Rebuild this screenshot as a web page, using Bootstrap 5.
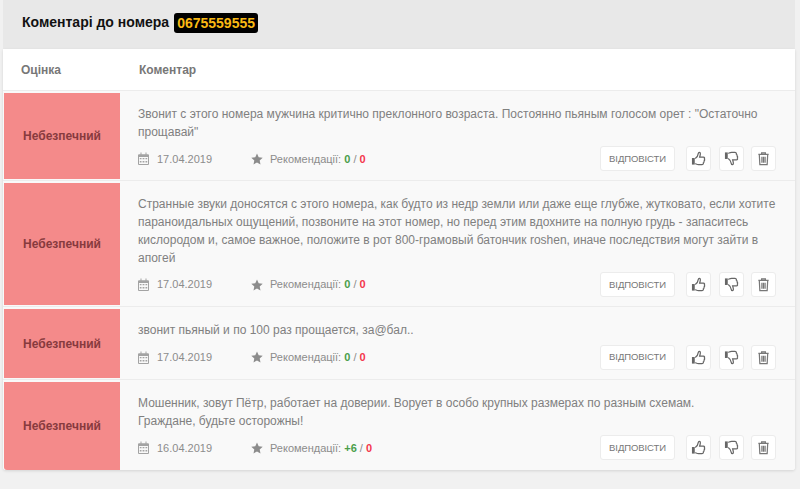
<!DOCTYPE html>
<html lang="uk"><head><meta charset="utf-8">
<link href="https://cdn.jsdelivr.net/npm/bootstrap@5.3.0/dist/css/bootstrap.min.css" rel="stylesheet">
<style>
html,body{height:100%}
body{background:#f1f1f1;font-family:"Liberation Sans",Arial,sans-serif;font-size:12px;color:#808080;overflow:hidden}
.head-band{height:49px;margin:0 5px 0 3px;background:#e8e8e8;padding:0 0 4px 19px;color:#111;font-size:14px;font-weight:700}
.phone-tag{background:#000;color:#f9b914;border-radius:3px;padding:0 3px;height:20px;line-height:20px;margin-left:5px;font-size:14px}
.sheet{margin:0 5px 0 3px;background:#fff;border-radius:0 0 3px 3px;box-shadow:0 1px 3px rgba(0,0,0,.12)}
.sheet-top{height:42px;border-bottom:1px solid #ececec;font-weight:700;color:#777}
.col-score{width:117px;flex:none}
.sheet-top .col-score{padding-left:18px}
.sheet-top .col-text{padding-left:19px}
.entry{background:#f9f9f9;border-bottom:1px solid #ececec;padding:2px 0 0 1px}
.entry:last-child{border-bottom:0;border-radius:0 0 3px 3px}
.score-box{background:#f48a8a;color:#873a3e;font-weight:700;width:116px;flex:none;margin-bottom:1px}
.entry:last-child .score-box{margin-bottom:0;border-bottom-left-radius:3px}
.entry-body{padding:13px 19px 9px 18px;min-width:0}
.entry:last-child .entry-body{padding-bottom:10px}
.entry-text{line-height:17.7px;margin:0 0 5px}
.meta-row{height:25px;font-size:11px;color:#8c8c8c}
.meta-date{width:113px}
.ic{fill:#a3a3a3;flex:none}
.star-ic{fill:#8c8c8c;margin-right:7px}
.ratio-up{color:#4a9e4a;font-weight:700}
.ratio-down{color:#f4364c;font-weight:700}
.sq-btn{height:25px;background:#fff;border:1px solid #ececec;border-radius:3px;color:#777;font-size:9.5px;letter-spacing:-.1px;padding:0;box-shadow:none}
.btn-set{gap:7.5px}
.reply-btn{width:75px;margin-right:3.5px}
.icon-btn{width:25px}
.icon-btn svg{width:15px;height:15px}
</style></head>
<body>
<div class="head-band d-flex align-items-center"><span>Коментарі до номера</span><span class="phone-tag">0675559555</span></div>
<div class="sheet">
  <div class="sheet-top d-flex align-items-center"><div class="col-score">Оцінка</div><div class="col-text">Коментар</div></div>

  <div class="entry d-flex">
    <div class="score-box d-flex align-items-center justify-content-center">Небезпечний</div>
    <div class="entry-body flex-grow-1">
      <p class="entry-text">Звонит с этого номера мужчина критично преклонного возраста. Постоянно пьяным голосом орет : "Остаточно прощавай"</p>
      <div class="meta-row d-flex align-items-center">
        <span class="meta-date d-flex align-items-center gap-2"><svg class="ic" width="11" height="13" viewBox="0 0 11 12" preserveAspectRatio="none"><path d="M1 2h1.500V.5h1V2h4V.5h1V2H10a1 1 0 0 1 1 1v8a1 1 0 0 1-1 1H1a1 1 0 0 1-1-1V3a1 1 0 0 1 1-1zm0 2.500V11h9V4.500zm.8 1h1.700v1.300H1.800zm2.800 0h1.800v1.300H4.600zm2.900 0h1.700v1.300H7.500zM1.800 8.300h1.700v1.300H1.800zm2.800 0h1.800v1.300H4.600zm2.900 0h1.700v1.300H7.500z" fill-rule="evenodd"/></svg>17.04.2019</span>
        <span class="d-flex align-items-center"><svg class="star-ic" width="12" height="12" viewBox="0 0 12 12"><path d="M6 .5l1.700 3.700 4 .5-3 2.700.8 4L6 9.400l-3.500 2 .8-4-3-2.700 4-.5z"/></svg><span>Рекомендації: <b class="ratio-up">0</b> / <b class="ratio-down">0</b></span></span>
        <span class="ms-auto d-flex btn-set"><button class="btn sq-btn reply-btn">ВІДПОВІСТИ</button><button class="btn sq-btn icon-btn"><svg viewBox="0 0 16 16"><path d="M1 7.500h3v7H1z" fill="#666"/><path d="M4.500 8c1.500-1 3-3 3.300-5.500C8 1 10 1 10 3c0 1.300-.5 2.500-.8 3.500h4c1.300 0 1.600 1.300 1 2 .6.800.4 1.700-.3 2.200.3.800 0 1.600-.7 1.900.2 1-.5 1.900-1.500 1.900H8c-1.500 0-2.500-.7-3.500-1" fill="none" stroke="#666" stroke-width="1.300"/></svg></button><button class="btn sq-btn icon-btn"><svg viewBox="0 0 16 16"><path d="M1 1.500h3v7H1z" fill="#666"/><path d="M4.500 8c1.500 1 3 3 3.300 5.500C8 15 10 15 10 13c0-1.300-.5-2.500-.8-3.500h4c1.300 0 1.600-1.300 1-2 .6-.8.4-1.700-.3-2.200.3-.8 0-1.600-.7-1.900.2-1-.5-1.900-1.500-1.900H8c-1.500 0-2.500.7-3.500 1" fill="none" stroke="#666" stroke-width="1.300"/></svg></button><button class="btn sq-btn icon-btn"><svg viewBox="0 0 16 16"><path d="M2.500 3.500h11M6 3.500V2h4v1.500M3.500 3.500l.6 11h7.800l.6-11M6.300 6v6.500M8 6v6.500M9.700 6v6.500" fill="none" stroke="#777" stroke-width="1.300"/></svg></button></span>
      </div>
    </div>
  </div>

  <div class="entry d-flex">
    <div class="score-box d-flex align-items-center justify-content-center">Небезпечний</div>
    <div class="entry-body flex-grow-1">
      <p class="entry-text">Странные звуки доносятся с этого номера, как будто из недр земли или даже еще глубже, жутковато, если хотите параноидальных ощущений, позвоните на этот номер, но перед этим вдохните на полную грудь - запаситесь кислородом и, самое важное, положите в рот 800-грамовый батончик roshen, иначе последствия могут зайти в апогей</p>
      <div class="meta-row d-flex align-items-center">
        <span class="meta-date d-flex align-items-center gap-2"><svg class="ic" width="11" height="13" viewBox="0 0 11 12" preserveAspectRatio="none"><path d="M1 2h1.500V.5h1V2h4V.5h1V2H10a1 1 0 0 1 1 1v8a1 1 0 0 1-1 1H1a1 1 0 0 1-1-1V3a1 1 0 0 1 1-1zm0 2.500V11h9V4.500zm.8 1h1.700v1.300H1.800zm2.800 0h1.800v1.300H4.600zm2.900 0h1.700v1.300H7.500zM1.800 8.300h1.700v1.300H1.800zm2.800 0h1.800v1.300H4.600zm2.900 0h1.700v1.300H7.500z" fill-rule="evenodd"/></svg>17.04.2019</span>
        <span class="d-flex align-items-center"><svg class="star-ic" width="12" height="12" viewBox="0 0 12 12"><path d="M6 .5l1.700 3.700 4 .5-3 2.700.8 4L6 9.400l-3.500 2 .8-4-3-2.700 4-.5z"/></svg><span>Рекомендації: <b class="ratio-up">0</b> / <b class="ratio-down">0</b></span></span>
        <span class="ms-auto d-flex btn-set"><button class="btn sq-btn reply-btn">ВІДПОВІСТИ</button><button class="btn sq-btn icon-btn"><svg viewBox="0 0 16 16"><path d="M1 7.500h3v7H1z" fill="#666"/><path d="M4.500 8c1.500-1 3-3 3.300-5.500C8 1 10 1 10 3c0 1.300-.5 2.500-.8 3.500h4c1.300 0 1.600 1.300 1 2 .6.800.4 1.700-.3 2.200.3.800 0 1.600-.7 1.900.2 1-.5 1.900-1.500 1.900H8c-1.500 0-2.500-.7-3.500-1" fill="none" stroke="#666" stroke-width="1.300"/></svg></button><button class="btn sq-btn icon-btn"><svg viewBox="0 0 16 16"><path d="M1 1.500h3v7H1z" fill="#666"/><path d="M4.500 8c1.500 1 3 3 3.300 5.500C8 15 10 15 10 13c0-1.300-.5-2.500-.8-3.500h4c1.300 0 1.600-1.300 1-2 .6-.8.4-1.700-.3-2.200.3-.8 0-1.600-.7-1.900.2-1-.5-1.900-1.500-1.900H8c-1.500 0-2.500.7-3.500 1" fill="none" stroke="#666" stroke-width="1.300"/></svg></button><button class="btn sq-btn icon-btn"><svg viewBox="0 0 16 16"><path d="M2.500 3.500h11M6 3.500V2h4v1.500M3.500 3.500l.6 11h7.800l.6-11M6.300 6v6.500M8 6v6.500M9.700 6v6.500" fill="none" stroke="#777" stroke-width="1.300"/></svg></button></span>
      </div>
    </div>
  </div>

  <div class="entry d-flex">
    <div class="score-box d-flex align-items-center justify-content-center">Небезпечний</div>
    <div class="entry-body flex-grow-1">
      <p class="entry-text">звонит пьяный и по 100 раз прощается, за@бал..</p>
      <div class="meta-row d-flex align-items-center">
        <span class="meta-date d-flex align-items-center gap-2"><svg class="ic" width="11" height="13" viewBox="0 0 11 12" preserveAspectRatio="none"><path d="M1 2h1.500V.5h1V2h4V.5h1V2H10a1 1 0 0 1 1 1v8a1 1 0 0 1-1 1H1a1 1 0 0 1-1-1V3a1 1 0 0 1 1-1zm0 2.500V11h9V4.500zm.8 1h1.700v1.300H1.800zm2.800 0h1.800v1.300H4.600zm2.900 0h1.700v1.300H7.500zM1.800 8.300h1.700v1.300H1.800zm2.800 0h1.800v1.300H4.600zm2.900 0h1.700v1.300H7.500z" fill-rule="evenodd"/></svg>17.04.2019</span>
        <span class="d-flex align-items-center"><svg class="star-ic" width="12" height="12" viewBox="0 0 12 12"><path d="M6 .5l1.700 3.700 4 .5-3 2.700.8 4L6 9.400l-3.500 2 .8-4-3-2.700 4-.5z"/></svg><span>Рекомендації: <b class="ratio-up">0</b> / <b class="ratio-down">0</b></span></span>
        <span class="ms-auto d-flex btn-set"><button class="btn sq-btn reply-btn">ВІДПОВІСТИ</button><button class="btn sq-btn icon-btn"><svg viewBox="0 0 16 16"><path d="M1 7.500h3v7H1z" fill="#666"/><path d="M4.500 8c1.500-1 3-3 3.300-5.500C8 1 10 1 10 3c0 1.300-.5 2.500-.8 3.500h4c1.300 0 1.600 1.300 1 2 .6.800.4 1.700-.3 2.200.3.800 0 1.600-.7 1.900.2 1-.5 1.900-1.500 1.900H8c-1.500 0-2.500-.7-3.500-1" fill="none" stroke="#666" stroke-width="1.300"/></svg></button><button class="btn sq-btn icon-btn"><svg viewBox="0 0 16 16"><path d="M1 1.500h3v7H1z" fill="#666"/><path d="M4.500 8c1.500 1 3 3 3.300 5.500C8 15 10 15 10 13c0-1.300-.5-2.500-.8-3.500h4c1.300 0 1.600-1.300 1-2 .6-.8.4-1.700-.3-2.200.3-.8 0-1.600-.7-1.900.2-1-.5-1.900-1.500-1.900H8c-1.500 0-2.500.7-3.500 1" fill="none" stroke="#666" stroke-width="1.300"/></svg></button><button class="btn sq-btn icon-btn"><svg viewBox="0 0 16 16"><path d="M2.500 3.500h11M6 3.500V2h4v1.500M3.500 3.500l.6 11h7.800l.6-11M6.300 6v6.500M8 6v6.500M9.700 6v6.500" fill="none" stroke="#777" stroke-width="1.300"/></svg></button></span>
      </div>
    </div>
  </div>

  <div class="entry d-flex">
    <div class="score-box d-flex align-items-center justify-content-center">Небезпечний</div>
    <div class="entry-body flex-grow-1">
      <p class="entry-text">Мошенник, зовут Пётр, работает на доверии. Ворует в особо крупных размерах по разным схемам.<br>Граждане, будьте осторожны!</p>
      <div class="meta-row d-flex align-items-center">
        <span class="meta-date d-flex align-items-center gap-2"><svg class="ic" width="11" height="13" viewBox="0 0 11 12" preserveAspectRatio="none"><path d="M1 2h1.500V.5h1V2h4V.5h1V2H10a1 1 0 0 1 1 1v8a1 1 0 0 1-1 1H1a1 1 0 0 1-1-1V3a1 1 0 0 1 1-1zm0 2.500V11h9V4.500zm.8 1h1.700v1.300H1.800zm2.800 0h1.800v1.300H4.600zm2.900 0h1.700v1.300H7.500zM1.800 8.300h1.700v1.300H1.800zm2.800 0h1.800v1.300H4.600zm2.900 0h1.700v1.300H7.500z" fill-rule="evenodd"/></svg>16.04.2019</span>
        <span class="d-flex align-items-center"><svg class="star-ic" width="12" height="12" viewBox="0 0 12 12"><path d="M6 .5l1.700 3.700 4 .5-3 2.700.8 4L6 9.400l-3.500 2 .8-4-3-2.700 4-.5z"/></svg><span>Рекомендації: <b class="ratio-up">+6</b> / <b class="ratio-down">0</b></span></span>
        <span class="ms-auto d-flex btn-set"><button class="btn sq-btn reply-btn">ВІДПОВІСТИ</button><button class="btn sq-btn icon-btn"><svg viewBox="0 0 16 16"><path d="M1 7.500h3v7H1z" fill="#666"/><path d="M4.500 8c1.500-1 3-3 3.300-5.500C8 1 10 1 10 3c0 1.300-.5 2.500-.8 3.500h4c1.300 0 1.600 1.300 1 2 .6.800.4 1.700-.3 2.200.3.800 0 1.600-.7 1.900.2 1-.5 1.900-1.500 1.900H8c-1.500 0-2.500-.7-3.500-1" fill="none" stroke="#666" stroke-width="1.300"/></svg></button><button class="btn sq-btn icon-btn"><svg viewBox="0 0 16 16"><path d="M1 1.500h3v7H1z" fill="#666"/><path d="M4.500 8c1.500 1 3 3 3.300 5.500C8 15 10 15 10 13c0-1.300-.5-2.500-.8-3.500h4c1.300 0 1.600-1.300 1-2 .6-.8.4-1.700-.3-2.200.3-.8 0-1.600-.7-1.900.2-1-.5-1.900-1.500-1.900H8c-1.500 0-2.500.7-3.500 1" fill="none" stroke="#666" stroke-width="1.300"/></svg></button><button class="btn sq-btn icon-btn"><svg viewBox="0 0 16 16"><path d="M2.500 3.500h11M6 3.500V2h4v1.500M3.500 3.500l.6 11h7.800l.6-11M6.300 6v6.500M8 6v6.500M9.700 6v6.500" fill="none" stroke="#777" stroke-width="1.300"/></svg></button></span>
      </div>
    </div>
  </div>
</div>
</body></html>
